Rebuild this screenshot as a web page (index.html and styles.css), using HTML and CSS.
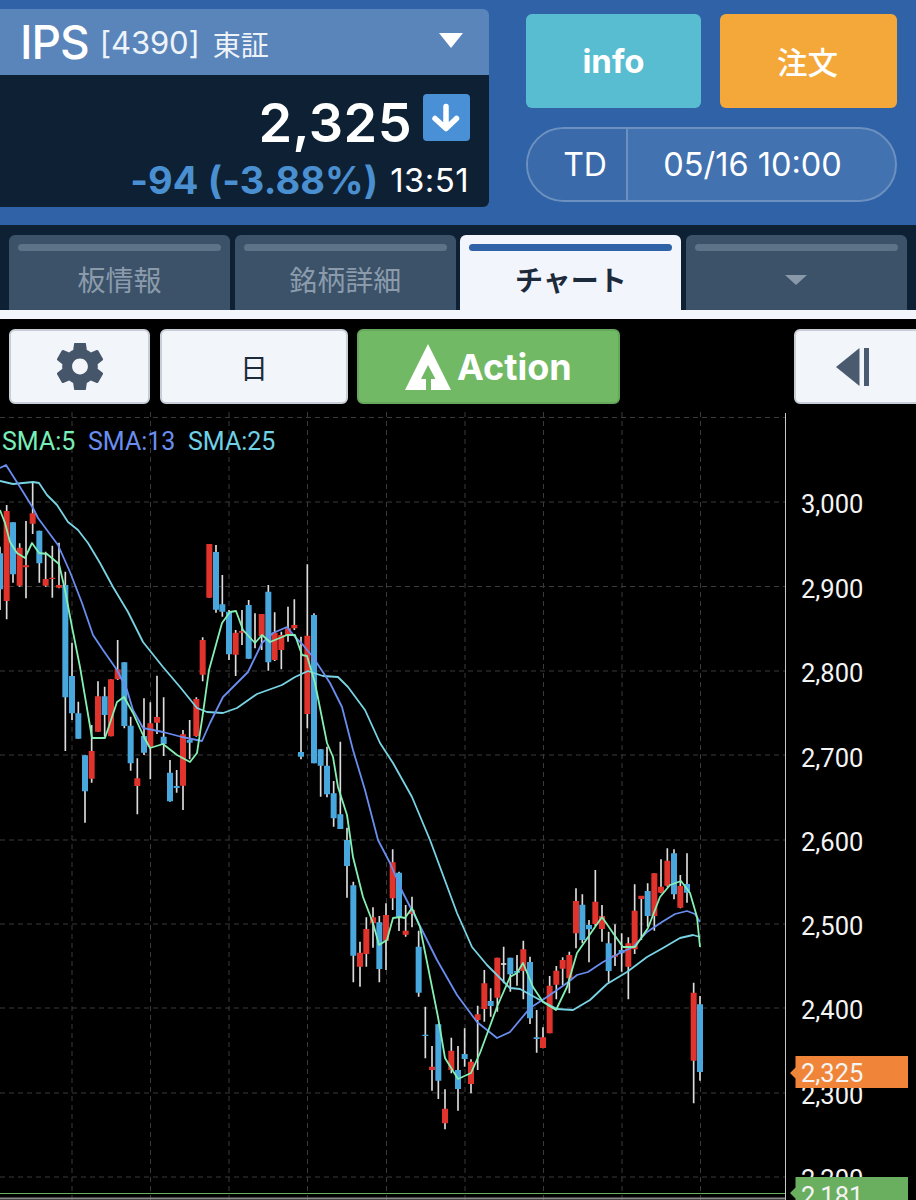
FILE: index.html
```html
<!DOCTYPE html>
<html lang="ja">
<head>
<meta charset="utf-8">
<title>IPS チャート</title>
<link rel="stylesheet" href="styles.css">
</head>
<body>
<div class="page">
  <header class="head">
    <section class="quote">
      <div class="quote-title">
        <span class="ticker">IPS</span>
        <span class="code">[4390]</span>
        <span class="market">東証</span>
        <svg class="title-caret" viewBox="0 0 24 15"><path d="M0 0H24L12 15Z"/></svg>
      </div>
      <div class="quote-body">
        <div class="price-row">
          <span class="price">2,325</span>
          <span class="down-box">
            <svg viewBox="0 0 47 47"><path d="M23 12.5V33M12 24.5 23 34.5 33.5 24.5"/></svg>
          </span>
        </div>
        <div class="change-row">
          <span class="change">-94 (-3.88%)</span>
          <span class="time">13:51</span>
        </div>
      </div>
    </section>
    <section class="actions">
      <div class="action-btns">
        <div class="btn-info">info</div>
        <div class="btn-order">注文</div>
      </div>
      <div class="session">
        <div class="session-type">TD</div>
        <div class="session-time">05/16 10:00</div>
      </div>
    </section>
  </header>

  <nav class="tabs">
    <div class="tab"><i class="tab-bar"></i><span>板情報</span></div>
    <div class="tab"><i class="tab-bar"></i><span>銘柄詳細</span></div>
    <div class="tab tab-active"><i class="tab-bar"></i><span>チャート</span></div>
    <div class="tab"><i class="tab-bar"></i>
      <svg class="tab-caret" viewBox="0 0 22 10"><path d="M0 0H22L11 10Z"/></svg>
    </div>
  </nav>
  <div class="tabs-foot"></div>

  <div class="toolbar">
    <div class="tool tool-gear">
      <svg viewBox="2.7 2.5 18.6 19"><path d="M19.14 12.94c.04-.3.06-.61.06-.94 0-.32-.02-.64-.07-.94l2.03-1.58a.49.49 0 0 0 .12-.61l-1.92-3.32a.488.488 0 0 0-.59-.22l-2.39.96c-.5-.38-1.03-.7-1.62-.94l-.36-2.54a.484.484 0 0 0-.48-.41h-3.84c-.24 0-.43.17-.47.41l-.36 2.54c-.59.24-1.13.57-1.62.94l-2.39-.96c-.22-.08-.47 0-.59.22L2.74 8.87c-.12.21-.08.47.12.61l2.03 1.58c-.05.3-.09.63-.09.94s.02.64.07.94l-2.03 1.58a.49.49 0 0 0-.12.61l1.92 3.32c.12.22.37.29.59.22l2.39-.96c.5.38 1.03.7 1.62.94l.36 2.54c.05.24.24.41.48.41h3.84c.24 0 .44-.17.47-.41l.36-2.54c.59-.24 1.13-.56 1.62-.94l2.39.96c.22.08.47 0 .59-.22l1.92-3.32c.12-.22.07-.47-.12-.61l-2.01-1.58zM12 15.2c-1.76 0-3.2-1.44-3.2-3.2s1.44-3.2 3.2-3.2 3.2 1.44 3.2 3.2-1.44 3.2-3.2 3.2z"/></svg>
    </div>
    <div class="tool tool-period">日</div>
    <div class="tool-action">
      <svg viewBox="0 0 46 46"><path fill-rule="evenodd" d="M23 0 46 46H0ZM23 21 16 35H21V46H26V35H30.500Z"/></svg>
      <span>Action</span>
    </div>
    <div class="tool tool-collapse">
      <svg viewBox="0 0 33 38"><path d="M23.500 0V38L0 19Z"/><rect x="28" y="0" width="5" height="38"/></svg>
    </div>
  </div>

  <div class="chart">
    <svg class="chart-svg" viewBox="0 404 916 796">
      <path class="grid" d="M0 417.500H785M0 502H785M0 586.500H785M0 671H785M0 755H785M0 840H785M0 924H785M0 1008H785M0 1093H785M0 1177H785"/>
      <path class="grid" d="M72 412V1200M150.500 412V1200M229 412V1200M307.500 412V1200M386.500 412V1200M465 412V1200M543.500 412V1200M622 412V1200M700.500 412V1200"/>
      <path class="axis" d="M785.500 413V1200"/>
      <path class="low-line" d="M0 1193.500H785"/>
      <path class="axis-foot" d="M0 1198.500H785"/>

      <g transform="translate(0 460) scale(.33333)">
        <path class="wick" d="M0 260V450M20 135V478M39 187V368M59 250V380M78 183V415M98 65V222M118 212V368M137 275V380M157 257V413M177 248V385M196 335V873M216 548V780M235 725V836M255 886V1088M275 795V968M294 664V815M314 680V830M333 658V829M353 540V660M373 607V805M392 770V932M412 895V1063M432 715V885M451 727V958M471 647V822M491 712V888M510 900V1025M530 930V998M549 810V1050M569 780V898M589 712V830M608 532V664M628 252V413M648 255V458M667 345V470M687 450V600M707 510V648M726 450V555M746 420V596M765 460V565M785 462V570M805 375V632M824 457V603M844 515V628M864 440V545M883 418V510M903 530V898M922 313V805M942 460V910M962 868V1010M981 860V1012M1001 963V1100"/>
        <path class="body-red" d="M20 153V423M59 263V377M78 316V322M98 160V191M137 357V377M157 353V357M177 375V383M275 873V956M294 709V815M333 658V829M353 628V658M412 955V978M451 790V860M471 771V788M549 823V977M589 717V828M608 540V644M628 252V413M707 518V584M726 513V518M785 462V528M824 518V600M844 525V570M864 505V525M883 495V505M922 527V762"/>
        <path class="body-blue" d="M0 280V388M39 187V343M118 212V310M196 375V712M216 648V760M235 760V836M255 886V994M314 709V765M373 607V798M392 797V910M432 828V878M491 830V852M510 938V1024M530 978V984M569 840V848M648 276V449M667 433V455M687 455V583M746 435V596M805 395V607M903 876V890M942 465V910M962 868V917M981 917V1003M1001 1000V1075"/>
      </g>
      <g transform="translate(280 560) scale(.33333)">
        <path class="wick" d="M181 545V807M201 803V1013M220 965V1267M240 1145V1280M259 1072V1220M279 1042V1163M298 1068V1267M318 1030V1230M338 868V1050M357 935V1113M377 1035V1130M396 1010V1102M416 1112V1310"/>
        <path class="body-red" d="M240 1178V1220M259 1107V1182M279 1072V1090M318 1065V1142M338 907V1015M377 1112V1124M396 1050V1062"/>
        <path class="body-blue" d="M181 763V807M201 840V918M220 976V1187M298 1087V1227M357 938V1070M416 1160V1298"/>
      </g>
      <g transform="translate(400 840) scale(.33333)">
        <path class="wick" d="M76 500V655M96 618V752M115 553V777M135 748V868M154 593V700M174 618V812M194 565V680M213 658V760M233 497V690M253 390V545M272 445V530M292 353V515M311 320V430M331 353V455M351 345V437M370 302V478M390 350V552M410 510V638M429 562V625M449 408V580M469 378V478M488 352V435M508 335V460M528 145V325M547 163V310M567 240V367M586 90V258M606 195V305M626 275V428M645 253V378M665 280V395M685 292V478M704 133V342M724 170V300M743 130V260M763 100V272M783 58V160M802 25V140M822 28V178M841 105V205M861 40V188M881 428V790M900 468V722"/>
        <path class="body-red" d="M96 680V690M135 806V850M154 632V690M213 665V732M233 523V540M253 430V507M292 353V473M370 328V393M429 592V624M449 437V580M469 392V434M488 360V386M508 345V415M528 183V280M586 185V252M606 228V267M645 345V350M685 310V380M704 212V328M724 167V177M763 100V228M783 140V158M802 62V137M841 138V203M881 458V662"/>
        <path class="body-blue" d="M76 584V588M115 553V722M174 690V747M194 642V657M272 483V498M331 353V403M351 393V398M390 366V535M410 592V597M547 194V300M567 255V268M626 310V393M665 330V340M743 153V228M822 40V163M861 132V158M900 493V696"/>
        <path class="doji" d="M303 372H319"/>
      </g>

      <polyline class="sma sma25" points="0,481 13,484 33,482 39,483 47,495 57,505 68,522 78,530 88,543 100,563 113,587 128,612 143,642 163,667 180,687 197,708 207,712 223,713 237,708 257,694 282,685 295,677 308,671 323,676 338,677 348,687 365,710 380,743 393,763 412,797 430,840 457,913 472,947 487,965 510,988 520,989 540,1000 557,1009 573,1010 590,1000 607,984 627,972 647,957 663,948 680,938 693,935 700,937"/>
      <polyline class="sma sma13" points="0,468 6,465 20,487 33,508 38,518 58,545 70,572 82,603 93,635 103,650 117,670 127,690 133,710 143,728 163,732 182,737 202,741 210,723 223,697 248,672 262,643 273,633 287,627 295,637 303,645 313,657 330,683 342,707 353,750 365,790 378,840 390,863 403,893 417,920 437,960 457,995 477,1022 497,1038 510,1032 530,1008 547,997 567,983 577,975 588,972 603,962 620,953 633,947 647,932 662,922 675,914 687,911 695,914 700,922"/>
      <polyline class="sma sma5" points="0,510 5,523 10,542 17,553 25,558 32,543 39,553 47,554 59,564 65,590 72,627 80,667 92,738 105,738 117,702 124,697 133,713 143,735 150,748 163,744 177,755 190,762 197,753 203,713 209,670 222,623 230,612 236,611 243,630 255,643 262,635 270,642 287,635 295,635 302,655 307,656 315,683 327,743 333,757 338,787 347,815 353,857 363,897 373,923 379,945 387,940 393,918 400,917 405,918 412,908 420,927 438,1017 445,1058 458,1079 471,1073 480,1053 497,1007 510,977 517,973 523,963 533,987 543,1002 556,1010 567,987 577,953 602,917 613,933 623,947 635,947 648,928 660,897 670,885 681,881 690,893 697,917 700,947"/>

      <text class="legend leg5" x="2" y="450">SMA:5</text>
      <text class="legend leg13" x="88" y="450">SMA:13</text>
      <text class="legend leg25" x="188" y="450">SMA:25</text>

      <text class="tick" x="801" y="513">3,000</text>
      <text class="tick" x="801" y="598">2,900</text>
      <text class="tick" x="801" y="682">2,800</text>
      <text class="tick" x="801" y="767">2,700</text>
      <text class="tick" x="801" y="851">2,600</text>
      <text class="tick" x="801" y="935">2,500</text>
      <text class="tick" x="801" y="1019">2,400</text>
      <text class="tick" x="801" y="1104">2,300</text>
      <text class="tick" x="801" y="1188">2,200</text>

      <path class="tag-orange" d="M795.500 1056H908V1088H795.500V1078.500L790 1073 795.500 1067.500Z"/>
      <text class="tick" x="801" y="1082">2,325</text>
      <path class="tag-green" d="M795.500 1177H908V1200H795.500V1198.500L790 1193 795.500 1187.500Z"/>
      <text class="tick" x="801" y="1205">2,181</text>
    </svg>
  </div>
</div>
</body>
</html>
```

FILE: styles.css
```css
* { box-sizing: border-box; }
html, body { margin: 0; padding: 0; background: #000; }
body {
  width: 916px;
  height: 1200px;
  overflow: hidden;
  font-family: Inter, "Noto Sans CJK JP", sans-serif;
}
.page { display: flex; flex-direction: column; height: 1200px; }

/* Header */
.head {
  display: flex;
  height: 225px;
  flex: none;
  background: #2f62a6;
  padding-top: 9px;
}
.quote {
  width: 489px;
  height: 198px;
  border-radius: 0 6px 6px 0;
  overflow: hidden;
  display: flex;
  flex-direction: column;
  flex: none;
}
.quote-title {
  height: 66px;
  background: #5a85ba;
  display: flex;
  align-items: center;
  padding: 0 26px 0 20px;
  color: #fff;
}
.ticker { font-size: 46px; font-weight: 500; letter-spacing: -1px; }
.code { font-size: 31px; margin-left: 11px; color: #eef3f9; letter-spacing: -.1px; }
.market { font-size: 28px; margin-left: 13px; color: #eef3f9; margin-top: 3px; }
.title-caret { width: 24px; height: 15px; margin-left: auto; fill: #fff; margin-top: -4px; }
.quote-body {
  flex: 1;
  background: #0e2033;
  display: flex;
  flex-direction: column;
  align-items: flex-end;
  padding: 19px 19px 0 0;
}
.price-row { display: flex; align-items: flex-start; gap: 11px; height: 60px; }
.price { font-size: 54px; font-weight: 600; line-height: 58px; color: #fff; letter-spacing: .4px; }
.down-box { width: 47px; height: 47px; background: #4a90d6; border-radius: 4px; display: block; }
.down-box svg { display: block; width: 47px; height: 47px; fill: none; stroke: #fff; stroke-width: 5.5; stroke-linecap: round; stroke-linejoin: round; }
.change-row { display: flex; align-items: center; gap: 12px; margin-top: 4px; height: 44px; padding-right: 1px; }
.change { font-size: 38px; font-weight: 700; color: #4a8fd0; letter-spacing: .1px; }
.time { font-size: 33px; color: #fff; letter-spacing: .4px; }

.actions {
  margin-left: 37px;
  width: 371px;
  display: flex;
  flex-direction: column;
  padding-top: 5px;
}
.action-btns { display: flex; gap: 19px; height: 94px; }
.btn-info, .btn-order {
  flex: 1;
  border-radius: 6px;
  color: #fff;
  display: flex;
  align-items: center;
  justify-content: center;
  font-size: 33px;
  font-weight: 700;
}
.btn-info { background: #59bdd2; }
.btn-order { background: #f5a83a; font-size: 30.500px; font-weight: 500; padding-right: 2px; }
.session {
  margin-top: 19px;
  height: 75px;
  border: 2px solid #6c90bf;
  border-radius: 38px;
  display: flex;
  color: #fff;
  font-size: 32.500px;
  overflow: hidden;
  background: #4272b0;
}
.session-type {
  width: 100px;
  background: #3a6aaa;
  border-right: 2px solid #6c90bf;
  display: flex;
  align-items: center;
  justify-content: center;
  padding-left: 16px;
  font-size: 32px;
}
.session-time {
  flex: 1;
  display: flex;
  align-items: center;
  justify-content: center;
  padding-right: 18px;
}

/* Tabs */
.tabs {
  height: 85px;
  flex: none;
  background: #0e2033;
  display: flex;
  gap: 4.670px;
  padding: 10px 9px 0;
}
.tab {
  width: 221px;
  background: #3b5268;
  border-radius: 6px 6px 0 0;
  display: flex;
  flex-direction: column;
  align-items: center;
  padding: 9px 9px 0;
  color: #8b9bac;
  font-size: 28px;
}
.tab-bar { display: block; width: 100%; height: 7px; background: #5d7388; border-radius: 4px; }
.tab span { margin-top: 10px; line-height: 40px; }
.tab-active { background: #f2f6fc; color: #1d2a3b; font-weight: 700; }
.tab-active .tab-bar { background: #2f62a6; }
.tab-caret { width: 22px; height: 10px; fill: #8a99a9; margin-top: 24px; }
.tabs-foot { height: 9px; flex: none; background: #f2f6fc; }

/* Toolbar */
.toolbar {
  height: 85px;
  background: #000;
  display: flex;
  padding: 10px 0 0 9px;
  flex: none;
}
.tool {
  height: 75px;
  flex: none;
  background: #f2f5fa;
  border: 2px solid #c8ced8;
  border-radius: 6px;
  display: flex;
  align-items: center;
  justify-content: center;
}
.tool-gear { width: 141px; }
.tool-gear svg { width: 46px; height: 47px; fill: #45566b; }
.tool-period { width: 188px; margin-left: 10px; color: #1d2a3b; font-size: 28px; }
.tool-action {
  width: 263px;
  height: 75px;
  flex: none;
  margin-left: 9px;
  background: #72b966;
  border: 2px solid #65a75b;
  border-radius: 6px;
  display: flex;
  align-items: center;
  padding-left: 46px;
  gap: 6px;
  color: #fff;
  font-size: 36px;
  font-weight: 700;
}
.tool-action svg { width: 46px; height: 46px; fill: #fff; flex: none; }
.tool-collapse { width: 130px; margin-left: 174px; justify-content: flex-start; padding-left: 40px; }
.tool-collapse svg { width: 33px; height: 38px; fill: #4a5b70; flex: none; }

/* Chart */
.chart { flex: 1; background: #000; min-height: 0; }
.chart-svg { display: block; width: 916px; height: 796px; }
.grid { fill: none; stroke: #3a3a3a; stroke-width: 1; stroke-dasharray: 5 4; }
.axis { stroke: #c8c8c8; stroke-width: 1; }
.low-line { stroke: #6aaf5f; stroke-width: 1; }
.axis-foot { stroke: #8a8a8a; stroke-width: 2; }
.wick { fill: none; stroke: #dcdcdc; stroke-width: 5; }
.body-red { fill: none; stroke: #df332b; stroke-width: 18; }
.body-blue { fill: none; stroke: #48a8de; stroke-width: 18; }
.doji { fill: none; stroke: #dcdcdc; stroke-width: 5; }
.sma { fill: none; stroke-width: 1.800; stroke-linejoin: round; }
.sma5 { stroke: #84f0b4; }
.sma13 { stroke: #6a8df0; }
.sma25 { stroke: #78d4e4; }
.legend { font-family: Roboto, sans-serif; font-size: 25px; }
.leg5 { fill: #78eeb8; }
.leg13 { fill: #6a8df0; }
.leg25 { fill: #6fd0e6; }
.tick { font-family: Roboto, sans-serif; font-size: 25.500px; fill: #f4f4f4; }
.tag-orange { fill: #f0853a; }
.tag-green { fill: #6aaf5f; }
```
